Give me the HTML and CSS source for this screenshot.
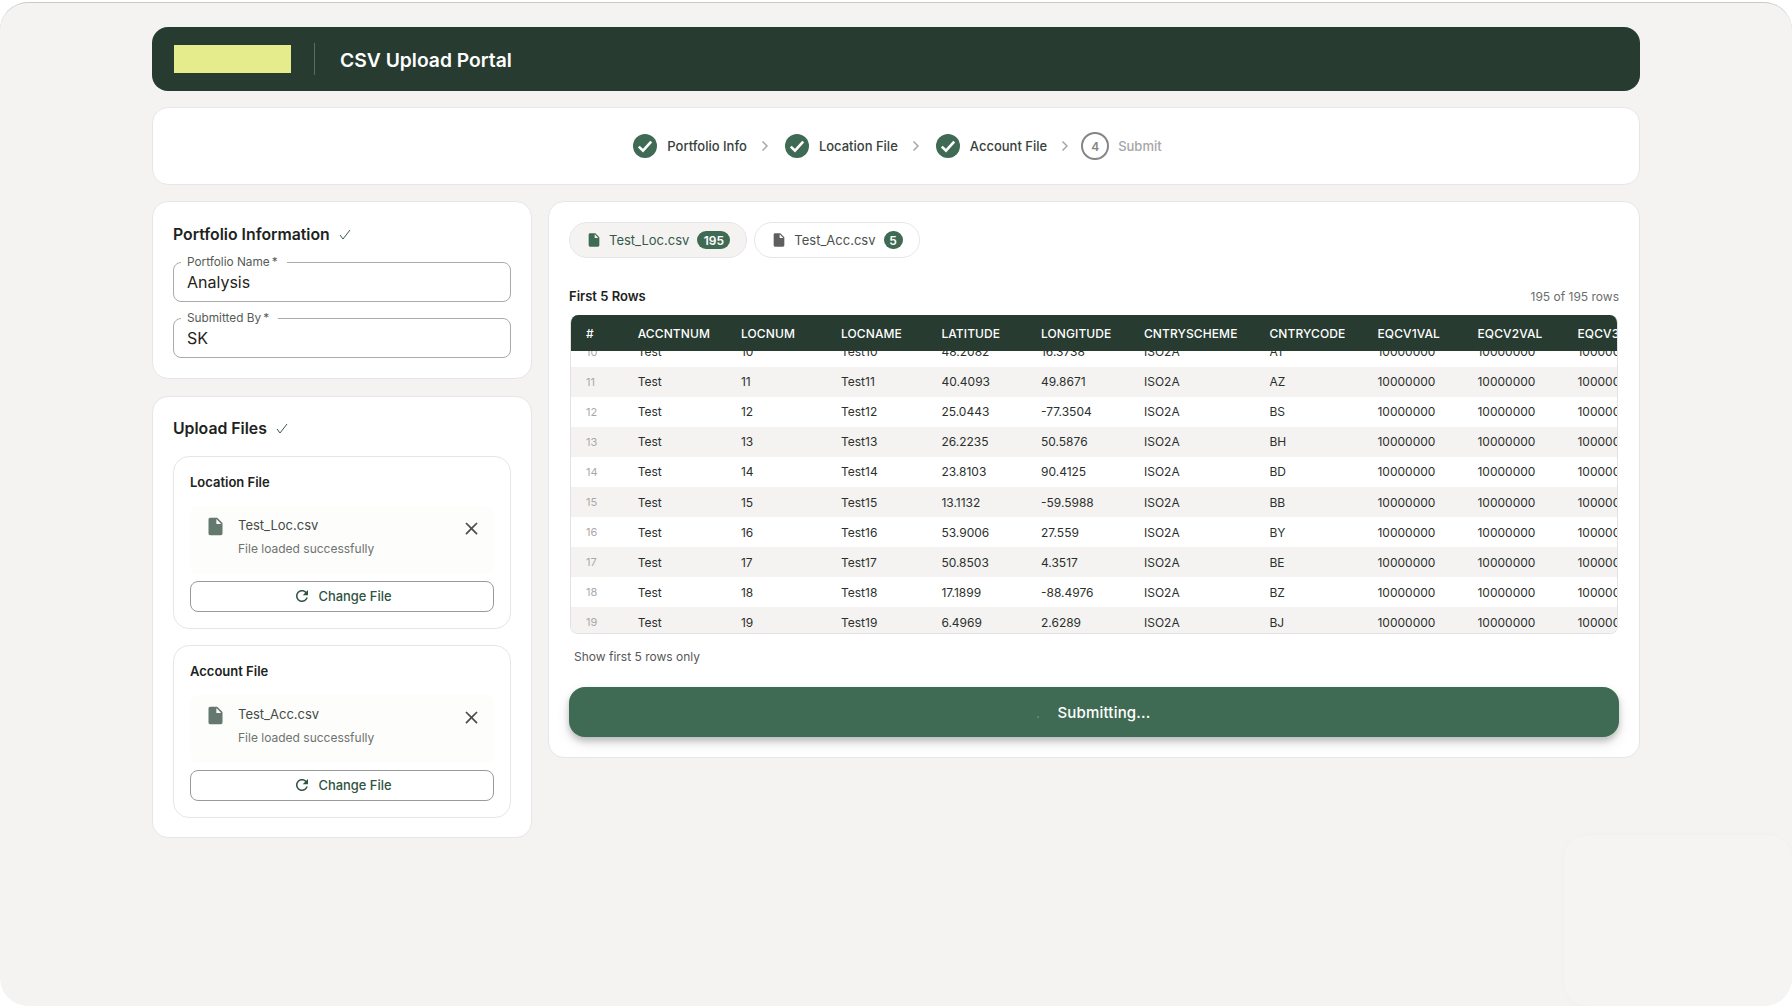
FILE: index.html
```html
<!DOCTYPE html>
<html lang="en">
<head>
<meta charset="utf-8">
<title>CSV Upload Portal</title>
<link rel="stylesheet" href="styles.css">
</head>
<body>
<div class="frame">
  <div class="ghost"></div>
  <main class="page">
    <header class="topbar">
      <div class="logo"></div>
      <div class="topbar-divider"></div>
      <h1 class="topbar-title">CSV Upload Portal</h1>
    </header>

    <nav class="stepper">
      <div class="step">
        <svg class="step-check" viewBox="0 0 24 24"><circle cx="12" cy="12" r="12" fill="#3f6b54"/><path d="M5.8 12.6l4.2 4 8.2-9" fill="none" stroke="#fff" stroke-width="2.6"/></svg>
        <span class="step-label">Portfolio Info</span>
      </div>
      <svg class="step-chevron" viewBox="0 0 8 12"><path d="M1.5 1.5L6 6l-4.5 4.5" fill="none" stroke="#a8a8a8" stroke-width="1.5"/></svg>
      <div class="step">
        <svg class="step-check" viewBox="0 0 24 24"><circle cx="12" cy="12" r="12" fill="#3f6b54"/><path d="M5.8 12.6l4.2 4 8.2-9" fill="none" stroke="#fff" stroke-width="2.6"/></svg>
        <span class="step-label">Location File</span>
      </div>
      <svg class="step-chevron" viewBox="0 0 8 12"><path d="M1.5 1.5L6 6l-4.5 4.5" fill="none" stroke="#a8a8a8" stroke-width="1.5"/></svg>
      <div class="step">
        <svg class="step-check" viewBox="0 0 24 24"><circle cx="12" cy="12" r="12" fill="#3f6b54"/><path d="M5.8 12.6l4.2 4 8.2-9" fill="none" stroke="#fff" stroke-width="2.6"/></svg>
        <span class="step-label">Account File</span>
      </div>
      <svg class="step-chevron" viewBox="0 0 8 12"><path d="M1.5 1.5L6 6l-4.5 4.5" fill="none" stroke="#a8a8a8" stroke-width="1.5"/></svg>
      <div class="step step-pending">
        <span class="step-number">4</span>
        <span class="step-label">Submit</span>
      </div>
    </nav>

    <div class="columns">
      <aside class="sidebar">
        <section class="card info-card">
          <h2 class="card-title">Portfolio Information
            <svg class="title-check" viewBox="0 0 12 11"><path d="M1 6l3 4 7-9" fill="none" stroke="#3a5a49" stroke-width="1"/></svg>
          </h2>
          <div class="field">
            <label class="field-label" for="pname">Portfolio Name&#8201;*</label>
            <input class="field-input" id="pname" value="Analysis">
          </div>
          <div class="field">
            <label class="field-label" for="sby">Submitted By&#8201;*</label>
            <input class="field-input" id="sby" value="SK">
          </div>
        </section>

        <section class="card upload-card">
          <h2 class="card-title">Upload Files
            <svg class="title-check" viewBox="0 0 12 11"><path d="M1 6l3 4 7-9" fill="none" stroke="#3a5a49" stroke-width="1"/></svg>
          </h2>

          <div class="file-card">
            <h3 class="file-card-title">Location File</h3>
            <div class="file-box">
              <svg class="file-icon" viewBox="0 0 24 24"><path d="M6 2c-1.1 0-1.99.9-1.99 2L4 20c0 1.1.89 2 1.99 2H18c1.1 0 2-.9 2-2V8l-6-6H6zm7 7V3.5L18.5 9H13z"/></svg>
              <div class="file-text">
                <div class="file-name">Test_Loc.csv</div>
                <div class="file-status">File loaded successfully</div>
              </div>
              <svg class="file-close" viewBox="0 0 24 24"><path d="M19 6.41 17.59 5 12 10.59 6.41 5 5 6.41 10.59 12 5 17.59 6.41 19 12 13.41 17.59 19 19 17.59 13.41 12z"/></svg>
            </div>
            <button class="change-btn" type="button">
              <svg class="change-icon" viewBox="0 0 24 24"><path d="M17.65 6.35C16.2 4.9 14.21 4 12 4c-4.42 0-7.99 3.58-7.99 8s3.57 8 7.99 8c3.73 0 6.84-2.55 7.73-6h-2.08c-.82 2.33-3.04 4-5.65 4-3.31 0-6-2.69-6-6s2.69-6 6-6c1.66 0 3.14.69 4.22 1.78L13 11h7V4l-2.35 2.35z"/></svg>
              Change File
            </button>
          </div>

          <div class="file-card">
            <h3 class="file-card-title">Account File</h3>
            <div class="file-box">
              <svg class="file-icon" viewBox="0 0 24 24"><path d="M6 2c-1.1 0-1.99.9-1.99 2L4 20c0 1.1.89 2 1.99 2H18c1.1 0 2-.9 2-2V8l-6-6H6zm7 7V3.5L18.5 9H13z"/></svg>
              <div class="file-text">
                <div class="file-name">Test_Acc.csv</div>
                <div class="file-status">File loaded successfully</div>
              </div>
              <svg class="file-close" viewBox="0 0 24 24"><path d="M19 6.41 17.59 5 12 10.59 6.41 5 5 6.41 10.59 12 5 17.59 6.41 19 12 13.41 17.59 19 19 17.59 13.41 12z"/></svg>
            </div>
            <button class="change-btn" type="button">
              <svg class="change-icon" viewBox="0 0 24 24"><path d="M17.65 6.35C16.2 4.9 14.21 4 12 4c-4.42 0-7.99 3.58-7.99 8s3.57 8 7.99 8c3.73 0 6.84-2.55 7.73-6h-2.08c-.82 2.33-3.04 4-5.65 4-3.31 0-6-2.69-6-6s2.69-6 6-6c1.66 0 3.14.69 4.22 1.78L13 11h7V4l-2.35 2.35z"/></svg>
              Change File
            </button>
          </div>
        </section>
      </aside>

      <section class="card preview-card">
        <div class="tabs">
          <div class="tab tab-active">
            <svg class="tab-icon" viewBox="0 0 24 24"><path d="M6 2c-1.1 0-1.99.9-1.99 2L4 20c0 1.1.89 2 1.99 2H18c1.1 0 2-.9 2-2V8l-6-6H6zm7 7V3.5L18.5 9H13z"/></svg>
            <span class="tab-name">Test_Loc.csv</span>
            <span class="tab-badge">195</span>
          </div>
          <div class="tab">
            <svg class="tab-icon" viewBox="0 0 24 24"><path d="M6 2c-1.1 0-1.99.9-1.99 2L4 20c0 1.1.89 2 1.99 2H18c1.1 0 2-.9 2-2V8l-6-6H6zm7 7V3.5L18.5 9H13z"/></svg>
            <span class="tab-name">Test_Acc.csv</span>
            <span class="tab-badge tab-badge-round">5</span>
          </div>
        </div>

        <div class="table-meta">
          <span class="table-title">First 5 Rows</span>
          <span class="table-count">195 of 195 rows</span>
        </div>

        <div class="data-table">
          <div class="row head">
            <span>#</span><span>ACCNTNUM</span><span>LOCNUM</span><span>LOCNAME</span><span>LATITUDE</span><span>LONGITUDE</span><span>CNTRYSCHEME</span><span>CNTRYCODE</span><span>EQCV1VAL</span><span>EQCV2VAL</span><span>EQCV3VAL</span>
          </div>
          <div class="table-body">
            <div class="rows-scrolled">
              <div class="row"><span class="idx">10</span><span>Test</span><span>10</span><span>Test10</span><span>48.2082</span><span>16.3738</span><span>ISO2A</span><span>AT</span><span>10000000</span><span>10000000</span><span>10000000</span></div>
              <div class="row"><span class="idx">11</span><span>Test</span><span>11</span><span>Test11</span><span>40.4093</span><span>49.8671</span><span>ISO2A</span><span>AZ</span><span>10000000</span><span>10000000</span><span>10000000</span></div>
              <div class="row"><span class="idx">12</span><span>Test</span><span>12</span><span>Test12</span><span>25.0443</span><span>-77.3504</span><span>ISO2A</span><span>BS</span><span>10000000</span><span>10000000</span><span>10000000</span></div>
              <div class="row"><span class="idx">13</span><span>Test</span><span>13</span><span>Test13</span><span>26.2235</span><span>50.5876</span><span>ISO2A</span><span>BH</span><span>10000000</span><span>10000000</span><span>10000000</span></div>
              <div class="row"><span class="idx">14</span><span>Test</span><span>14</span><span>Test14</span><span>23.8103</span><span>90.4125</span><span>ISO2A</span><span>BD</span><span>10000000</span><span>10000000</span><span>10000000</span></div>
              <div class="row"><span class="idx">15</span><span>Test</span><span>15</span><span>Test15</span><span>13.1132</span><span>-59.5988</span><span>ISO2A</span><span>BB</span><span>10000000</span><span>10000000</span><span>10000000</span></div>
              <div class="row"><span class="idx">16</span><span>Test</span><span>16</span><span>Test16</span><span>53.9006</span><span>27.559</span><span>ISO2A</span><span>BY</span><span>10000000</span><span>10000000</span><span>10000000</span></div>
              <div class="row"><span class="idx">17</span><span>Test</span><span>17</span><span>Test17</span><span>50.8503</span><span>4.3517</span><span>ISO2A</span><span>BE</span><span>10000000</span><span>10000000</span><span>10000000</span></div>
              <div class="row"><span class="idx">18</span><span>Test</span><span>18</span><span>Test18</span><span>17.1899</span><span>-88.4976</span><span>ISO2A</span><span>BZ</span><span>10000000</span><span>10000000</span><span>10000000</span></div>
              <div class="row"><span class="idx">19</span><span>Test</span><span>19</span><span>Test19</span><span>6.4969</span><span>2.6289</span><span>ISO2A</span><span>BJ</span><span>10000000</span><span>10000000</span><span>10000000</span></div>
            </div>
          </div>
        </div>

        <p class="table-note">Show first 5 rows only</p>

        <button class="submit-btn" type="button">
          <svg class="spinner" viewBox="0 0 12 12"><circle cx="1" cy="11" r="0.6" fill="#cfdcd4"/></svg>
          Submitting...
        </button>
      </section>
    </div>
  </main>
</div>
</body>
</html>
```

FILE: styles.css
```css
* { box-sizing: border-box; }

html, body {
  margin: 0;
  height: 1006px;
  background: #ffffff;
  overflow: hidden;
}

body {
  font-family: "Inter", "Liberation Sans", sans-serif;
  color: #1f2421;
}

.frame {
  position: relative;
  height: 1004px;
  margin-top: 2px;
  background: #f4f3f1;
  border-top: 1px solid #c9c9c9;
  border-radius: 28px;
  overflow: hidden;
}

.ghost {
  position: absolute;
  right: 0;
  bottom: 0;
  width: 228px;
  height: 171px;
  background: #f5f4f2;
  border-radius: 24px;
  box-shadow: 0 0 6px rgba(0, 0, 0, 0.02);
}

.page {
  position: relative;
  width: 1488px;
  margin: 0 auto;
  padding-top: 24px;
}

.topbar {
  display: flex;
  align-items: center;
  height: 64px;
  padding-left: 22px;
  background: #273b30;
  border-radius: 16px;
}

.logo {
  width: 117px;
  height: 28px;
  background: #e4ec8c;
}

.topbar-divider {
  width: 1px;
  height: 32px;
  margin: 0 25px 0 23px;
  background: #5b6c63;
}

.topbar-title {
  margin: 0;
  padding-top: 1px;
  color: #ffffff;
  font-size: 19.3px;
  font-weight: 600;
}

.stepper {
  display: flex;
  align-items: center;
  justify-content: center;
  height: 78px;
  margin-top: 16px;
  padding-left: 3px;
  background: #ffffff;
  border: 1px solid #e6e6ea;
  border-radius: 16px;
}

.step {
  display: flex;
  align-items: center;
  gap: 10px;
}

.step-check {
  width: 24px;
  height: 24px;
}

.step-label {
  font-size: 13px;
  font-weight: 500;
  color: #36413b;
}

.step-pending {
  gap: 9px;
  margin-left: -4px;
}

.step-pending .step-label {
  color: #a6a6a6;
}

.step-chevron {
  width: 8px;
  height: 12px;
  margin: 0 16px 0 14px;
}

.step-number {
  display: flex;
  align-items: center;
  justify-content: center;
  width: 28px;
  height: 28px;
  border: 2px solid #858585;
  border-radius: 50%;
  color: #858585;
  font-size: 12px;
  font-weight: 600;
}

.columns {
  display: grid;
  grid-template-columns: 380px 1092px;
  column-gap: 16px;
  align-items: start;
  margin-top: 16px;
}

.sidebar {
  display: flex;
  flex-direction: column;
  gap: 17px;
}

.card {
  background: #ffffff;
  border: 1px solid #e6e6ea;
  border-radius: 16px;
}

.info-card {
  height: 178px;
  padding: 20px;
}

.upload-card {
  height: 442px;
  padding: 19px 20px 20px;
}

.card-title {
  display: flex;
  align-items: center;
  gap: 9px;
  height: 24px;
  margin: 0 0 16px;
  font-size: 15.8px;
  font-weight: 600;
  color: #1c2320;
}

.title-check {
  width: 12px;
  height: 11px;
}

.field {
  position: relative;
  margin-bottom: 16px;
}

.field-label {
  position: absolute;
  left: 8px;
  top: -7px;
  padding: 0 9px 0 6px;
  background: #ffffff;
  font-size: 11.8px;
  line-height: 15px;
  color: #555b57;
}

.field-input {
  display: block;
  width: 100%;
  height: 40px;
  padding: 0 13px;
  border: 1px solid #ababab;
  border-radius: 8px;
  background: #ffffff;
  font-family: inherit;
  font-size: 16px;
  color: #1f2421;
}

.file-card {
  height: 173px;
  margin-bottom: 16px;
  padding: 16px;
  border: 1px solid #e6e6ea;
  border-radius: 16px;
}

.file-card:last-child {
  margin-bottom: 0;
}

.file-card-title {
  height: 18px;
  margin: 0 0 15px;
  font-size: 13px;
  line-height: 18px;
  font-weight: 600;
  color: #1c2320;
}

.file-box {
  display: flex;
  align-items: flex-start;
  height: 68px;
  padding: 9px 12px 0 15px;
  background: #fdfdfc;
  border-radius: 8px;
}

.file-icon {
  flex: none;
  width: 21px;
  height: 21px;
  margin-top: 1px;
  fill: #65786d;
}

.file-text {
  flex: 1;
  margin-left: 12px;
}

.file-name {
  font-size: 13px;
  line-height: 20px;
  color: #444a46;
}

.file-status {
  margin-top: 6px;
  font-size: 12px;
  line-height: 16px;
  color: #6e7370;
}

.file-close {
  flex: none;
  width: 21px;
  height: 21px;
  margin-top: 3px;
  fill: #4a4f4c;
}

.change-btn {
  display: flex;
  align-items: center;
  justify-content: center;
  gap: 8px;
  width: 100%;
  height: 31px;
  margin-top: 7px;
  padding: 0 0 1px;
  background: #ffffff;
  border: 1px solid #9a9a9a;
  border-radius: 8px;
  font-family: inherit;
  font-size: 12.9px;
  font-weight: 500;
  color: #2f5442;
}

.change-icon {
  width: 18px;
  height: 18px;
  fill: #2f5442;
}

.preview-card {
  height: 557px;
  padding: 20px 20px 19px 20px;
}

.tabs {
  display: flex;
  gap: 7px;
}

.tab {
  display: flex;
  align-items: center;
  height: 36px;
  padding: 0 16px 0 16px;
  background: #ffffff;
  border: 1px solid #e6e6ea;
  border-radius: 18px;
  color: #4b514d;
}

.tab-active {
  background: #f4f3f1;
  color: #33594a;
}

.tab-icon {
  width: 16px;
  height: 16px;
  fill: #5d605e;
}

.tab-active .tab-icon {
  fill: #3f6b54;
}

.tab-name {
  margin-left: 7px;
  font-size: 13px;
}

.tab-badge {
  display: flex;
  align-items: center;
  justify-content: center;
  height: 18px;
  min-width: 33px;
  margin-left: 8px;
  background: #3f6b54;
  border-radius: 9px;
  color: #ffffff;
  font-size: 12px;
  font-weight: 600;
}

.tab-badge-round {
  min-width: 19px;
}

.table-meta {
  display: flex;
  align-items: center;
  justify-content: space-between;
  height: 18px;
  margin-top: 29px;
}

.table-title {
  font-size: 13px;
  font-weight: 600;
  color: #1c2320;
}

.table-count {
  font-size: 12px;
  color: #6a6e6b;
}

.data-table {
  display: flex;
  flex-direction: column;
  height: 319px;
  margin: 10px 1px 0;
  overflow: hidden;
  border-radius: 8px;
  border: 1px solid #e2e2e6;
  border-top: 0;
}

.row {
  display: grid;
  grid-template-columns: 51.7px 103.3px 100px 100.4px 99.6px 103px 125.5px 108px 100px 100px 100px;
  align-items: center;
  height: 30.1px;
  flex: none;
  font-size: 12px;
  color: #2b302d;
  white-space: nowrap;
}

.row span {
  padding-left: 16px;
}

.row .idx {
  font-size: 11px;
  color: #a9a9a9;
}

.head {
  height: 36px;
  margin: 0 -1px;
  background: #273b30;
  color: #ffffff;
  font-weight: 500;
  letter-spacing: 0.1px;
}

.table-body {
  flex: 1;
  min-height: 0;
  overflow: hidden;
}

.rows-scrolled {
  margin: -14.5px -1px 0;
}

.rows-scrolled .row:nth-child(even) {
  background: #f4f3f1;
}

.table-note {
  height: 18px;
  margin: 14px 0 0 5px;
  font-size: 12px;
  line-height: 18px;
  color: #55595a;
}

.submit-btn {
  display: flex;
  align-items: center;
  justify-content: center;
  gap: 8px;
  width: 100%;
  height: 50px;
  margin-top: 21px;
  background: #3f6b54;
  border: 0;
  border-radius: 16px;
  box-shadow: 0 4px 6px rgba(0, 0, 0, 0.2), 0 6px 14px rgba(0, 0, 0, 0.1);
  font-family: inherit;
  font-size: 15px;
  font-weight: 500;
  color: #ffffff;
  letter-spacing: 0.2px;
}

.spinner {
  width: 12px;
  height: 12px;
}
```
